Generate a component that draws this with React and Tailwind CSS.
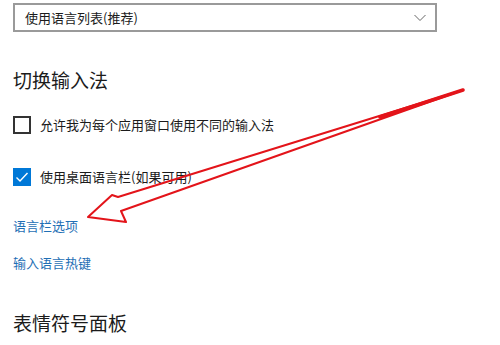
const font = { fontFamily: '"Noto Sans CJK SC", "Microsoft YaHei", sans-serif' };

const Checkbox = ({ checked }) =>
  checked ? (
    <div className="w-[18px] h-[18px] bg-[#0078d7] flex items-center justify-center shrink-0">
      <svg width="14" height="14" viewBox="0 0 14 14" fill="none">
        <path d="M1.5 7.5 L5 11 L12.5 3" stroke="white" strokeWidth="1.4" />
      </svg>
    </div>
  ) : (
    <div className="w-[18px] h-[18px] border-2 border-[#333] bg-white shrink-0" />
  );

const App = () => {
  return (
    <div
      className="relative w-[500px] h-[345px] bg-white overflow-hidden pl-[13px] pt-[3px] text-[#1b1b1b]"
      style={font}
    >
      <div className="w-[424px] h-[29px] border-2 border-[#9a9a9a] flex items-center justify-between pl-[10px] pr-[9px]">
        <span className="text-[13px] leading-[20px]">使用语言列表(推荐)</span>
        <svg width="12" height="8" viewBox="0 0 12 8" fill="none">
          <path d="M0.5 1 L6 6.5 L11.5 1" stroke="#666" strokeWidth="1" />
        </svg>
      </div>

      <h2 className="mt-[35px] text-[19px] leading-[26px] font-normal">切换输入法</h2>

      <div className="mt-[22px] h-[20px] flex items-center gap-[9px]">
        <Checkbox />
        <span className="text-[13px] leading-[20px]">允许我为每个应用窗口使用不同的输入法</span>
      </div>

      <div className="mt-[32px] h-[20px] flex items-center gap-[9px]">
        <Checkbox checked />
        <span className="text-[13px] leading-[20px]">使用桌面语言栏(如果可用)</span>
      </div>

      <div className="mt-[29px] text-[13px] leading-[20px] text-[#1f6fb5]">语言栏选项</div>
      <div className="mt-[17px] text-[13px] leading-[20px] text-[#1f6fb5]">输入语言热键</div>

      <h2 className="mt-[37px] text-[19px] leading-[26px] font-normal">表情符号面板</h2>

      {/* red annotation arrow drawn over the page */}
      <svg
        className="absolute left-0 top-0 pointer-events-none"
        width="500"
        height="345"
        viewBox="0 0 500 345"
        fill="none"
      >
        <path
          d="M463 90 L118 197 L112 195 L88 217 L126 222 L121 211 Z"
          stroke="#e3141a"
          strokeWidth="2"
          strokeLinejoin="round"
          strokeLinecap="round"
        />
        <path d="M463 90 L380 117" stroke="#e3141a" strokeWidth="3.5" strokeLinecap="round" />
      </svg>
    </div>
  );
};

export default App;
